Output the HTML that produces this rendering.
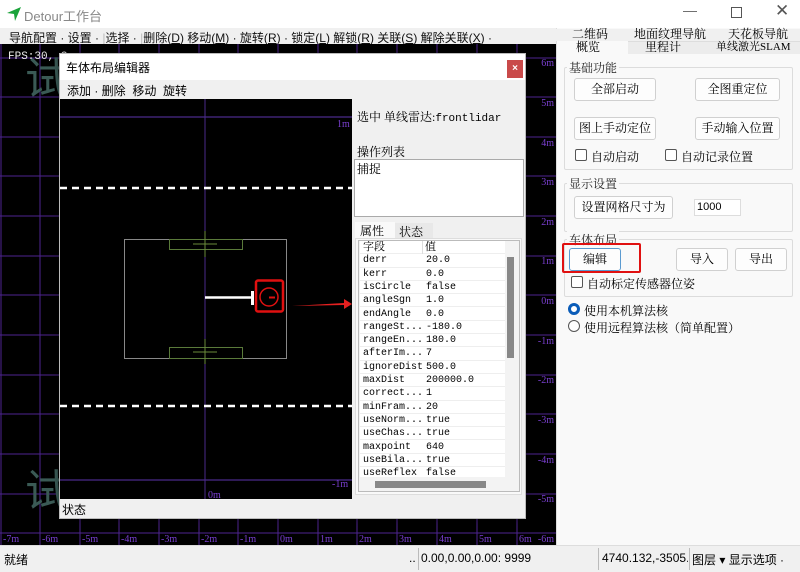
<!DOCTYPE html>
<html><head><meta charset="utf-8"><style>
*{margin:0;padding:0;box-sizing:border-box}
body{width:800px;height:572px;overflow:hidden;background:#f0f0f0;font-family:"Liberation Sans","Noto Sans CJK SC",sans-serif;font-size:12px;color:#000;position:relative}
.a{position:absolute;white-space:nowrap}
.serif{font-family:"Liberation Serif","Noto Serif CJK SC",serif}
.mono{font-family:"Liberation Mono","Noto Serif CJK SC",monospace}
.btn{position:absolute;background:#fdfdfd;border:1px solid #d0d0d0;border-radius:3px;text-align:center;font-family:"Liberation Serif","Noto Serif CJK SC",serif;font-size:12px}
.grp{position:absolute;border:1px solid #dcdcdc;border-radius:2px}
.gl{position:absolute;background:#f9f9f9;padding:0 2px;font-family:"Liberation Serif","Noto Serif CJK SC",serif;font-size:12px;color:#222}
.cb{position:absolute;width:12px;height:12px;border:1px solid #555;border-radius:2px;background:#fff}
.row{position:absolute;left:0;width:145px;height:13.3px;border-bottom:1px solid #eee;font-family:"Liberation Mono","Noto Serif CJK SC",monospace;font-size:10px;line-height:13px}
.row span{position:absolute}
</style></head><body>
<div class="a" style="left:0;top:0;width:800px;height:28px;background:#fff"></div>
<svg class="a" style="left:6px;top:6px" width="16" height="16"><path d="M1 7 L15 1 L9 15 L8 8 Z" fill="#1aa33a"/></svg>
<div class="a" style="left:24px;top:6px;font-size:13px;color:#888">Detour工作台</div>
<div class="a" style="left:683px;top:2px;font-size:14px;color:#666">—</div>
<div class="a" style="left:731px;top:7px;width:11px;height:11px;border:1px solid #555"></div>
<div class="a" style="left:775px;top:1px;font-size:17px;color:#555">✕</div>
<div class="a" style="left:0;top:28px;width:556px;height:16px;background:#f0f0f0"></div>
<div class="a" style="left:9px;top:29px;font-size:12px;color:#111">导航配置 · 设置 · <span style="color:#bbb">|</span>选择 · <span style="color:#bbb">|</span>删除(<u>D</u>) 移动(<u>M</u>) · 旋转(<u>R</u>) · 锁定(<u>L</u>) 解锁(<u>R</u>) 关联(<u>S</u>) 解除关联(<u>X</u>) ·</div>
<div class="a" style="left:0;top:44px;width:556px;height:501px;background:#000"></div>
<svg class="a" style="left:0;top:44px" width="556" height="501">
<g stroke="#4e2490" stroke-width="1">
<line x1="1" y1="0" x2="1" y2="501"/><line x1="40" y1="0" x2="40" y2="501"/><line x1="80" y1="0" x2="80" y2="501"/><line x1="119" y1="0" x2="119" y2="501"/><line x1="159" y1="0" x2="159" y2="501"/><line x1="199" y1="0" x2="199" y2="501"/><line x1="238" y1="0" x2="238" y2="501"/><line x1="278" y1="0" x2="278" y2="501"/><line x1="318" y1="0" x2="318" y2="501"/><line x1="357" y1="0" x2="357" y2="501"/><line x1="397" y1="0" x2="397" y2="501"/><line x1="437" y1="0" x2="437" y2="501"/><line x1="477" y1="0" x2="477" y2="501"/><line x1="517" y1="0" x2="517" y2="501"/>
<line x1="0" y1="14" x2="556" y2="14"/><line x1="0" y1="53" x2="556" y2="53"/><line x1="0" y1="93" x2="556" y2="93"/><line x1="0" y1="132" x2="556" y2="132"/><line x1="0" y1="172" x2="556" y2="172"/><line x1="0" y1="212" x2="556" y2="212"/><line x1="0" y1="251" x2="556" y2="251"/><line x1="0" y1="291" x2="556" y2="291"/><line x1="0" y1="331" x2="556" y2="331"/><line x1="0" y1="370" x2="556" y2="370"/><line x1="0" y1="410" x2="556" y2="410"/><line x1="0" y1="450" x2="556" y2="450"/><line x1="0" y1="489" x2="556" y2="489"/>
</g>
<g fill="#7a3fd0" font-family="Liberation Serif" font-size="10" text-anchor="end">
<text x="554" y="22">6m</text><text x="554" y="62">5m</text><text x="554" y="102">4m</text><text x="554" y="141">3m</text><text x="554" y="181">2m</text><text x="554" y="220">1m</text><text x="554" y="260">0m</text><text x="554" y="300">-1m</text><text x="554" y="339">-2m</text><text x="554" y="379">-3m</text><text x="554" y="419">-4m</text><text x="554" y="458">-5m</text><text x="554" y="498">-6m</text>
</g>
<g fill="#7a3fd0" font-family="Liberation Serif" font-size="10">
<text x="3" y="498">-7m</text><text x="42" y="498">-6m</text><text x="82" y="498">-5m</text><text x="121" y="498">-4m</text><text x="161" y="498">-3m</text><text x="201" y="498">-2m</text><text x="240" y="498">-1m</text><text x="280" y="498">0m</text><text x="320" y="498">1m</text><text x="359" y="498">2m</text><text x="399" y="498">3m</text><text x="439" y="498">4m</text><text x="479" y="498">5m</text><text x="519" y="498">6m</text>
</g>
</svg>
<div class="a mono" style="left:8px;top:51px;font-size:11px;color:#eee">FPS:30, G</div>
<div class="a" style="left:25px;top:58px;font-size:44px;color:#3a5a55;line-height:44px">试</div>
<div class="a" style="left:25px;top:470px;font-size:44px;color:#3a5a55;line-height:44px">试</div>
<div class="a" style="left:59px;top:53px;width:467px;height:466px;background:#f0f0f0;border:1px solid #bbb;box-shadow:0 0 6px rgba(0,0,0,.4)"></div>
<div class="a" style="left:60px;top:54px;width:465px;height:26px;background:#fff"></div>
<div class="a" style="left:66px;top:59px;font-size:12px">车体布局编辑器</div>
<div class="a" style="left:507px;top:60px;width:16px;height:18px;background:#c94a4a;color:#fff;font-size:10px;text-align:center;line-height:18px;font-weight:bold">×</div>
<div class="a" style="left:67px;top:82px;font-size:12px">添加 · 删除&nbsp; 移动&nbsp; 旋转</div>
<div class="a" style="left:60px;top:99px;width:292px;height:400px;background:#000"></div>
<svg class="a" style="left:60px;top:99px" width="292" height="400">
<line x1="145" y1="0" x2="145" y2="400" stroke="#4a2a8a" stroke-width="1"/>
<line x1="0" y1="18" x2="292" y2="18" stroke="#4a2a8a" stroke-width="1.2"/>
<line x1="0" y1="381" x2="292" y2="381" stroke="#4a2a8a" stroke-width="1.2"/>
<text x="277" y="28" fill="#7a3fd0" font-family="Liberation Serif" font-size="10">1m</text>
<text x="148" y="399" fill="#7a3fd0" font-family="Liberation Serif" font-size="10">0m</text>
<text x="272" y="388" fill="#7a3fd0" font-family="Liberation Serif" font-size="10">-1m</text>
<line x1="0" y1="89" x2="292" y2="89" stroke="#fff" stroke-width="2.5" stroke-dasharray="7,5"/>
<line x1="0" y1="307" x2="292" y2="307" stroke="#fff" stroke-width="2.5" stroke-dasharray="7,5"/>
<rect x="64.5" y="140.5" width="162" height="119" fill="none" stroke="#888" stroke-width="1"/>
<rect x="109.5" y="140.5" width="73" height="10" fill="none" stroke="#5a7a3a"/>
<rect x="109.5" y="248.5" width="73" height="11" fill="none" stroke="#5a7a3a"/>
<g stroke="#6a8a3a"><line x1="145" y1="132" x2="145" y2="158"/><line x1="133" y1="145" x2="157" y2="145"/><line x1="145" y1="240" x2="145" y2="265"/><line x1="133" y1="253" x2="157" y2="253"/></g>
<line x1="145" y1="198.5" x2="192" y2="198.5" stroke="#fff" stroke-width="2.5"/>
<rect x="191" y="192" width="3" height="14" fill="#fff"/>
<rect x="195" y="195" width="2" height="8" fill="#fff"/>
<rect x="196" y="181.5" width="27" height="31" rx="2" fill="none" stroke="#e01010" stroke-width="2.5"/>
<circle cx="209" cy="198" r="9" fill="none" stroke="#e01010" stroke-width="1.5"/>
<line x1="209" y1="198.5" x2="215" y2="198.5" stroke="#e01010" stroke-width="2"/>
<path d="M232 207 L284 204 L284 200 L292 205 L284 210 L284 206 Z" fill="#e52020"/>
</svg>
<div class="a serif" style="left:357px;top:108px;font-size:12px">选中 单线雷达:<span class="mono" style="font-size:11px">frontlidar</span></div>
<div class="a serif" style="left:357px;top:143px;font-size:12px">操作列表</div>
<div class="a" style="left:354px;top:159px;width:170px;height:58px;background:#fff;border:1px solid #aaa"></div>
<div class="a serif" style="left:357px;top:160px;font-size:12px">捕捉</div>
<div class="a" style="left:355px;top:222px;width:40px;height:17px;background:#f9f9f9"></div>
<div class="a" style="left:395px;top:223px;width:38px;height:15px;background:#e8e8e8"></div>
<div class="a serif" style="left:360px;top:222px;font-size:12px">属性</div>
<div class="a serif" style="left:399px;top:223px;font-size:12px">状态</div>
<div class="a" style="left:355px;top:238px;width:167px;height:257px;background:#f9f9f9;border:1px solid #ddd"></div>
<div class="a" style="left:358px;top:240px;width:162px;height:252px;background:#f3f3f3;border:1px solid #bbb"></div>
<div class="a" style="left:360px;top:241px;width:145px;height:236px;background:#fff;overflow:hidden">
<div class="row" style="top:0;font-family:'Liberation Serif','Noto Serif CJK SC',serif;font-size:11px"><span style="left:3px">字段</span><span style="left:65px">值</span></div>
<div style="position:absolute;left:62px;top:0;width:1px;height:13px;background:#ddd"></div>
<div class="row" style="top:13.3px"><span style="left:3px">derr</span><span style="left:66px">20.0</span></div>
<div class="row" style="top:26.6px"><span style="left:3px">kerr</span><span style="left:66px">0.0</span></div>
<div class="row" style="top:39.9px"><span style="left:3px">isCircle</span><span style="left:66px">false</span></div>
<div class="row" style="top:53.2px"><span style="left:3px">angleSgn</span><span style="left:66px">1.0</span></div>
<div class="row" style="top:66.5px"><span style="left:3px">endAngle</span><span style="left:66px">0.0</span></div>
<div class="row" style="top:79.8px"><span style="left:3px">rangeSt...</span><span style="left:66px">-180.0</span></div>
<div class="row" style="top:93.1px"><span style="left:3px">rangeEn...</span><span style="left:66px">180.0</span></div>
<div class="row" style="top:106.4px"><span style="left:3px">afterIm...</span><span style="left:66px">7</span></div>
<div class="row" style="top:119.7px"><span style="left:3px">ignoreDist</span><span style="left:66px">500.0</span></div>
<div class="row" style="top:133px"><span style="left:3px">maxDist</span><span style="left:66px">200000.0</span></div>
<div class="row" style="top:146.3px"><span style="left:3px">correct...</span><span style="left:66px">1</span></div>
<div class="row" style="top:159.6px"><span style="left:3px">minFram...</span><span style="left:66px">20</span></div>
<div class="row" style="top:172.9px"><span style="left:3px">useNorm...</span><span style="left:66px">true</span></div>
<div class="row" style="top:186.2px"><span style="left:3px">useChas...</span><span style="left:66px">true</span></div>
<div class="row" style="top:199.5px"><span style="left:3px">maxpoint</span><span style="left:66px">640</span></div>
<div class="row" style="top:212.8px"><span style="left:3px">useBila...</span><span style="left:66px">true</span></div>
<div class="row" style="top:226.1px"><span style="left:3px">useReflex</span><span style="left:66px">false</span></div>
</div>
<div class="a" style="left:507px;top:257px;width:7px;height:101px;background:#888"></div>
<div class="a" style="left:375px;top:481px;width:111px;height:7px;background:#888"></div>
<div class="a" style="left:60px;top:499px;width:465px;height:19px;background:#f0f0f0"></div>
<div class="a" style="left:62px;top:501px;font-size:12px">状态</div>
<div class="a" style="left:556px;top:28px;width:244px;height:517px;background:#f9f9f9;border-left:1px solid #ddd"></div>
<div class="a" style="left:556px;top:29px;width:244px;height:12px;background:#f0f0f0"></div>
<div class="a serif" style="left:572px;top:28px;font-size:12px;line-height:13px">二维码</div>
<div class="a serif" style="left:634px;top:28px;font-size:12px;line-height:13px">地面纹理导航</div>
<div class="a serif" style="left:728px;top:28px;font-size:12px;line-height:13px">天花板导航</div>
<div class="a" style="left:628px;top:41px;width:172px;height:13px;background:#ececec;border-top:1px solid #ddd"></div>
<div class="a serif" style="left:576px;top:41px;font-size:12px;line-height:13px">概览</div>
<div class="a serif" style="left:645px;top:41px;font-size:12px;line-height:13px">里程计</div>
<div class="a serif" style="left:716px;top:41px;font-size:11px;line-height:13px">单线激光SLAM</div>
<div class="grp" style="left:564px;top:67px;width:229px;height:103px"></div>
<div class="gl" style="left:567px;top:59px">基础功能</div>
<div class="btn" style="left:574px;top:78px;width:82px;height:23px;line-height:21px">全部启动</div>
<div class="btn" style="left:695px;top:78px;width:85px;height:23px;line-height:21px">全图重定位</div>
<div class="btn" style="left:574px;top:117px;width:82px;height:23px;line-height:21px">图上手动定位</div>
<div class="btn" style="left:695px;top:117px;width:85px;height:23px;line-height:21px">手动输入位置</div>
<div class="cb" style="left:575px;top:149px"></div><div class="a serif" style="left:591px;top:148px">自动启动</div>
<div class="cb" style="left:665px;top:149px"></div><div class="a serif" style="left:681px;top:148px">自动记录位置</div>
<div class="grp" style="left:564px;top:183px;width:229px;height:49px"></div>
<div class="gl" style="left:567px;top:175px">显示设置</div>
<div class="btn" style="left:574px;top:196px;width:99px;height:23px;line-height:21px">设置网格尺寸为</div>
<div class="a" style="left:694px;top:199px;width:47px;height:17px;background:#fff;border:1px solid #ddd;font-size:11px;padding:1px 2px">1000</div>
<div class="grp" style="left:564px;top:239px;width:229px;height:58px"></div>
<div class="gl" style="left:567px;top:231px">车体布局</div>
<div class="btn" style="left:569px;top:248px;width:52px;height:23px;line-height:21px;border-color:#5a9ad0">编辑</div>
<div class="a" style="left:562px;top:243px;width:79px;height:30px;border:2.5px solid #e01010;border-radius:2px"></div>
<div class="btn" style="left:676px;top:248px;width:52px;height:23px;line-height:21px">导入</div>
<div class="btn" style="left:735px;top:248px;width:52px;height:23px;line-height:21px">导出</div>
<div class="cb" style="left:571px;top:276px"></div><div class="a serif" style="left:587px;top:275px">自动标定传感器位姿</div>
<div class="a" style="left:568px;top:303px;width:12px;height:12px;border-radius:50%;border:3.5px solid #0a5cb8;background:#fff"></div>
<div class="a serif" style="left:584px;top:302px">使用本机算法核</div>
<div class="a" style="left:568px;top:320px;width:12px;height:12px;border-radius:50%;border:1px solid #555;background:#fff"></div>
<div class="a serif" style="left:584px;top:319px">使用远程算法核（简单配置）</div>
<div class="a" style="left:0;top:545px;width:800px;height:27px;background:#f0f0f0;border-top:1px solid #ddd"></div>
<div class="a" style="left:4px;top:551px;font-size:12px">就绪</div>
<div class="a" style="left:409px;top:551px;font-size:12px">..</div>
<div class="a" style="left:418px;top:548px;width:1px;height:22px;background:#bbb"></div>
<div class="a" style="left:421px;top:551px;font-size:12px">0.00,0.00,0.00: 9999</div>
<div class="a" style="left:598px;top:548px;width:1px;height:22px;background:#bbb"></div>
<div class="a" style="left:602px;top:551px;font-size:12px;width:86px;overflow:hidden">4740.132,-3505.5</div>
<div class="a" style="left:689px;top:548px;width:1px;height:22px;background:#bbb"></div>
<div class="a" style="left:692px;top:551px;font-size:12px">图层 ▾ 显示选项 ·</div>
</body></html>
